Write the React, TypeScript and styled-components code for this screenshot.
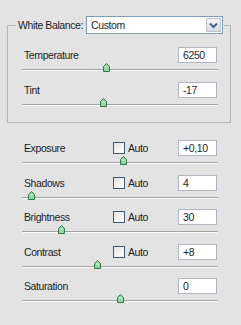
import React from 'react';
import styled, { createGlobalStyle } from 'styled-components';

const GlobalStyle = createGlobalStyle`
  html, body {
    margin: 0;
    background: #e3e3e3;
  }
  body {
    font-family: "Liberation Sans", Arial, sans-serif;
    font-size: 10.5px;
    letter-spacing: -0.4px;
    color: #1e1e1e;
  }
`;

const Panel = styled.div`
  width: 241px;
  height: 325px;
  box-sizing: border-box;
  padding: 16px 0 0 7px;
`;

const GroupBox = styled.fieldset`
  margin: 0;
  width: 224px;
  min-width: 0;
  box-sizing: border-box;
  border: 1px solid #b6b6b6;
  padding: 0 0 6px;
`;

const Legend = styled.legend`
  margin-left: 8px;
  padding: 0 1px 0 2px;
  display: flex;
  align-items: center;
  gap: 3px;
  height: 18px;
  white-space: nowrap;
`;

const Select = styled.div`
  width: 137px;
  flex: none;
  height: 18px;
  box-sizing: border-box;
  border: 1px solid #7f9db9;
  background: #fff;
  display: flex;
  align-items: center;
  padding-left: 4px;
`;

const SelectText = styled.span`
  flex: 1;
`;

const SelectButton = styled.div`
  width: 15px;
  height: 14px;
  margin-right: 1px;
  box-sizing: border-box;
  border: 1px solid #b9c1cc;
  background: linear-gradient(#f2f4f7, #d7dce4);
  display: flex;
  align-items: center;
  justify-content: center;
`;

const Rows = styled.div`
  padding: 13px 12px 0 14px;
`;

const Section = styled.div`
  padding-left: 15px;
  margin-top: 17px;
  width: 196px;
`;

const Row = styled.div`
  height: 34.5px;
`;

const Header = styled.div`
  display: flex;
  align-items: center;
  height: 16px;
`;

const Label = styled.span<{ $wide?: boolean }>`
  padding-left: 2px;
  width: ${(p) => (p.$wide ? 'auto' : '89px')};
  flex: ${(p) => (p.$wide ? 1 : 'none')};
`;

const AutoBox = styled.label`
  display: flex;
  align-items: center;
  gap: 3px;
  flex: 1;
`;

const Check = styled.span`
  width: 12px;
  height: 12px;
  box-sizing: border-box;
  border: 1px solid #3c5b7a;
  background: linear-gradient(135deg, #e6e4e2, #ffffff);
`;

const ValueBox = styled.div`
  width: 39px;
  height: 16px;
  margin-right: 1px;
  box-sizing: border-box;
  border: 1px solid #aeb6bf;
  background: #fff;
  padding-left: 4px;
  line-height: 14px;
`;

const TrackArea = styled.div`
  position: relative;
  height: 18px;
`;

const Track = styled.div`
  position: absolute;
  left: 0;
  right: 0;
  top: 6px;
  height: 1px;
  background: #a3a3a3;
  border-bottom: 1px solid #fbfbfb;
  border-radius: 1px;
`;

const Thumb = styled.svg`
  position: absolute;
  top: 0;
  width: 7px;
  height: 9px;
  margin-left: -3px;
`;

type SliderProps = {
  label: string;
  value: string;
  pos: number;
  auto?: boolean;
};

const Slider = ({ label, value, pos, auto }: SliderProps) => (
  <Row>
    <Header>
      <Label $wide={!auto}>{label}</Label>
      {auto && (
        <AutoBox>
          <Check />
          Auto
        </AutoBox>
      )}
      <ValueBox>{value}</ValueBox>
    </Header>
    <TrackArea>
      <Track />
      <Thumb viewBox="0 0 7 9" style={{ left: pos }}>
        <path
          d="M3.5 0.5 L6.5 3.5 L6.5 8.5 L0.5 8.5 L0.5 3.5 Z"
          fill="#8fd7a4"
          stroke="#2f7a45"
          strokeWidth="1"
        />
        <path d="M2 4 L5 4" stroke="#d9f5e1" strokeWidth="1" />
      </Thumb>
    </TrackArea>
  </Row>
);

const App = () => (
  <Panel>
    <GlobalStyle />
    <GroupBox>
      <Legend>
        White Balance:
        <Select>
          <SelectText>Custom</SelectText>
          <SelectButton>
            <svg width="9" height="7" viewBox="0 0 9 7">
              <path d="M1 1.5 L4.5 5 L8 1.5" fill="none" stroke="#4d6185" strokeWidth="2" />
            </svg>
          </SelectButton>
        </Select>
      </Legend>
      <Rows>
        <Slider label="Temperature" value="6250" pos={84} />
        <Slider label="Tint" value="-17" pos={81} />
      </Rows>
    </GroupBox>
    <Section>
      <Slider label="Exposure" value="+0,10" pos={101} auto />
      <Slider label="Shadows" value="4" pos={9} auto />
      <Slider label="Brightness" value="30" pos={39} auto />
      <Slider label="Contrast" value="+8" pos={75} auto />
      <Slider label="Saturation" value="0" pos={98} />
    </Section>
  </Panel>
);

export default App;
